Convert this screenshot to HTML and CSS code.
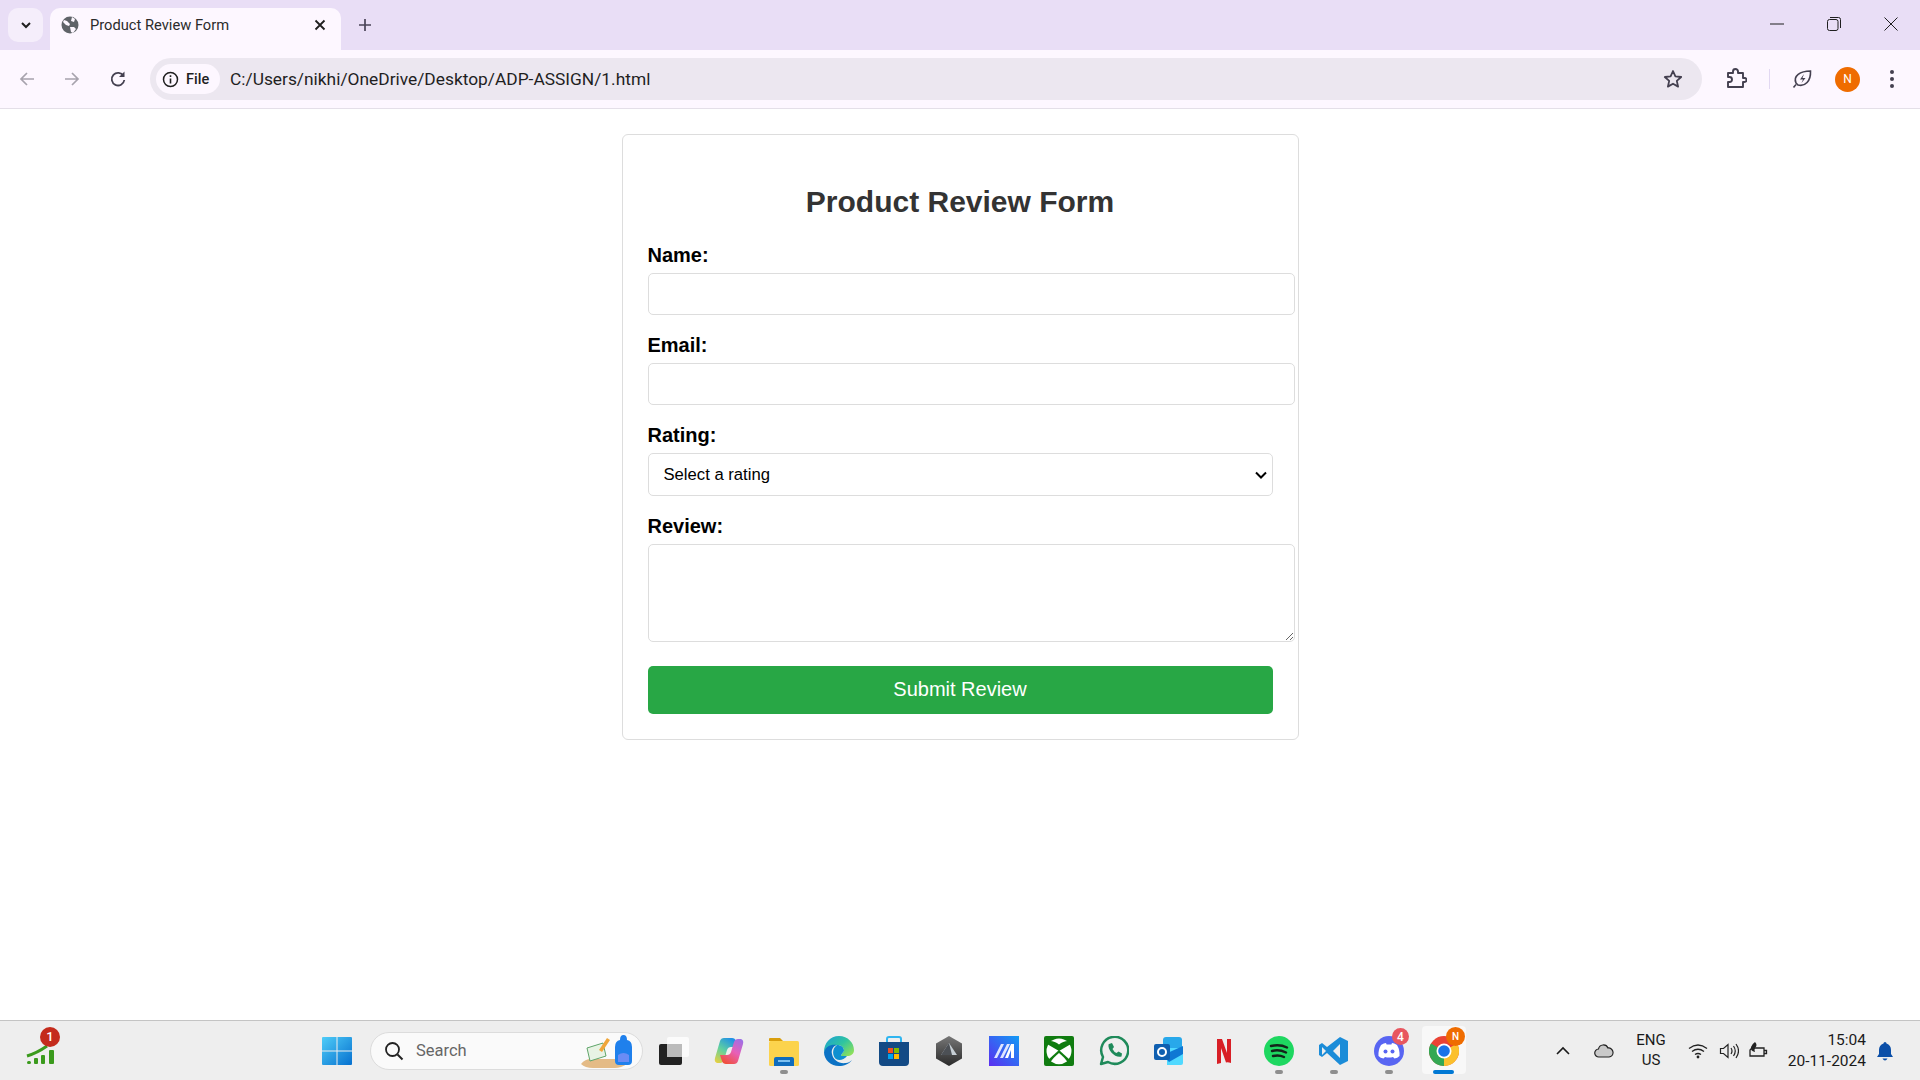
FILE: index.html
```html
<!DOCTYPE html>
<html>
<head>
    <meta charset="utf-8">
    <title>Product Review Form</title>
    <link rel="stylesheet" href="styles.css">
</head>
<body>
    <!-- browser tabs -->
    <div class="tabstrip">
        <div class="tabsearch">
            <svg width="14" height="14" viewBox="0 0 14 14"><path d="M3 5l4 4 4-4" fill="none" stroke="#1f1f1f" stroke-width="2"/></svg>
        </div>
        <div class="tab">
            <svg class="favicon" width="18" height="18" viewBox="0 0 18 18"><circle cx="9" cy="9" r="8.5" fill="#5f6368"/><path d="M3 4l3 1 3 3-1 2-3-1-3-3zM11 1l3 2-1 3-3-1zM9 11l4 0 2 2-3 4-2-1z" fill="#fdf7ff"/></svg>
            <span class="tabtitle">Product Review Form</span>
            <svg width="12" height="12" viewBox="0 0 12 12"><path d="M1.5 1.5l9 9M10.5 1.5l-9 9" stroke="#1f1f1f" stroke-width="1.8"/></svg>
        </div>
        <svg class="newtab" width="14" height="14" viewBox="0 0 14 14"><path d="M7 1v12M1 7h12" stroke="#4a4458" stroke-width="1.7"/></svg>
        <div class="winbtns">
            <svg width="14" height="14" viewBox="0 0 14 14"><path d="M0 7h14" stroke="#1f1f1f" stroke-width="1"/></svg>
            <svg width="14" height="14" viewBox="0 0 14 14"><rect x=".5" y="2.5" width="10.5" height="11" rx="2" fill="none" stroke="#1f1f1f"/><path d="M3 .5h8.500a2 2 0 0 1 2 2V11" fill="none" stroke="#1f1f1f"/></svg>
            <svg width="14" height="14" viewBox="0 0 14 14"><path d="M.5 .5l13 13M13.500 .5l-13 13" stroke="#1f1f1f" stroke-width="1"/></svg>
        </div>
    </div>

    <!-- address bar -->
    <div class="toolbar">
        <div class="navbtn">
            <svg width="18" height="18" viewBox="0 0 18 18"><path d="M16 9H3M9 3L3 9l6 6" fill="none" stroke="#a7a3ad" stroke-width="1.7"/></svg>
        </div>
        <div class="navbtn">
            <svg width="18" height="18" viewBox="0 0 18 18"><path d="M2 9h13M9 3l6 6-6 6" fill="none" stroke="#a7a3ad" stroke-width="1.7"/></svg>
        </div>
        <div class="navbtn navbtn-reload">
            <svg width="18" height="18" viewBox="0 0 18 18"><path d="M14.500 6A6.300 6.300 0 1 0 15.300 10" fill="none" stroke="#444050" stroke-width="1.800"/><path d="M15.500 1.500V7h-5.500z" fill="#444050"/></svg>
        </div>
        <div class="omnibox">
            <div class="chip">
                <svg width="17" height="17" viewBox="0 0 17 17"><circle cx="8.500" cy="8.500" r="7" fill="none" stroke="#1f1f1f" stroke-width="1.500"/><path d="M8.500 7.500v5M8.500 4.300v1.800" stroke="#1f1f1f" stroke-width="1.600"/></svg>
                <span>File</span>
            </div>
            <span class="url">C:/Users/nikhi/OneDrive/Desktop/ADP-ASSIGN/1.html</span>
            <svg class="star" width="20" height="20" viewBox="0 0 20 20"><path d="M10 2l2.400 5.400 5.800.6-4.400 3.900 1.300 5.700L10 14.700l-5.100 2.900 1.300-5.700L1.800 8l5.800-.6z" fill="none" stroke="#444050" stroke-width="1.800" stroke-linejoin="round"/></svg>
        </div>
        <div class="toolbtns">
            <svg class="btn-ext" width="22" height="22" viewBox="0 0 22 22"><path d="M3 5h5V3.500a2.500 2.500 0 0 1 5 0V5h5v5h1.500a2 2 0 0 1 0 4H18v5H3v-5h1.500a2.500 2.500 0 0 0 0-5H3z" fill="none" stroke="#444050" stroke-width="1.900" stroke-linejoin="round"/></svg>
            <span class="divider"></span>
            <svg class="btn-leaf" width="20" height="20" viewBox="0 0 20 20"><path d="M4 14C1 7 8 2 18.500 2 19 12 13 18 6 16z" fill="none" stroke="#444050" stroke-width="1.600"/><path d="M1.500 18.500L4 15.500" stroke="#444050" stroke-width="1.600"/><path d="M12 5l-4 5.500h3L9.500 14l4-5h-3z" fill="#444050"/></svg>
            <span class="avatar">N</span>
            <svg class="btn-dots" width="6" height="20" viewBox="0 0 6 20"><circle cx="3" cy="3" r="2" fill="#444050"/><circle cx="3" cy="10" r="2" fill="#444050"/><circle cx="3" cy="17" r="2" fill="#444050"/></svg>
        </div>
    </div>

    <!-- the page itself -->
    <div class="page">
        <form class="reviewcard" action="">
            <h2>Product Review Form</h2>
            <div class="group">
                <label for="name">Name:</label>
                <input type="text" id="name">
            </div>
            <div class="group">
                <label for="email">Email:</label>
                <input type="email" id="email">
            </div>
            <div class="group">
                <label for="rating">Rating:</label>
                <select id="rating">
                    <option>Select a rating</option>
                </select>
            </div>
            <div class="group group-last">
                <label for="review">Review:</label>
                <textarea id="review"></textarea>
            </div>
            <button type="button" class="submit">Submit Review</button>
        </form>
    </div>

    <!-- windows taskbar -->
    <div class="taskbar">
        <div class="widget">
            <svg width="34" height="30" viewBox="0 0 34 30"><g fill="#3a9a1c"><rect x="2" y="25" width="4" height="3" rx="1.500"/><rect x="9" y="22" width="4" height="6" rx="1"/><rect x="16" y="19" width="4" height="9" rx="1"/><rect x="24" y="14" width="5" height="14" rx="1"/></g><path d="M2 20Q12 17 22 10" fill="none" stroke="#3a9a1c" stroke-width="3"/></svg>
            <span class="badge badge-red">1</span>
        </div>
        <svg class="winlogo" width="30" height="30" viewBox="0 0 30 30">
            <defs><linearGradient id="wl" x1="0" y1="0" x2="1" y2="1"><stop offset="0" stop-color="#4fcdf8"/><stop offset="1" stop-color="#0670cf"/></linearGradient></defs>
            <path d="M1 1h13.500v13.500H0V2a1 1 0 0 1 1-1zM15.500 1H29a1 1 0 0 1 1 1v12.500H15.500zM0 15.500h14.500V29H1a1 1 0 0 1-1-1zM15.500 15.500H30V28a1 1 0 0 1-1 1H15.500z" fill="url(#wl)"/>
        </svg>
        <div class="searchbox">
            <svg width="20" height="20" viewBox="0 0 20 20"><circle cx="8.500" cy="8.500" r="6.500" fill="none" stroke="#222" stroke-width="1.800"/><path d="M13.500 13.500l5 5" stroke="#222" stroke-width="2"/></svg>
            <span class="searchtext">Search</span>
            <svg class="searchart" width="56" height="36" viewBox="0 0 56 36">
                <path d="M2 31q4-5 10-5h24q8 0 12 5-6 4-12 4H14q-8 0-12-4z" fill="#e4bb86"/>
                <path d="M8 15l16-5 3 13-16 5z" fill="#e8f3e4" stroke="#5fa56a" stroke-width="1"/>
                <path d="M20 17l8-12 3 2-8 12z" fill="#f0a63a"/>
                <path d="M36 14q0-6 5-7 0-5 3.500-5t3.500 5q5 1 5 7v14q0 4-4 4h-9q-4 0-4-4z" fill="#1f80ec"/>
                <path d="M39 22q5.500-4 11 0v7h-11z" fill="#6a8cf5"/>
            </svg>
        </div>
        <div class="applist">
            <div class="app">
                <svg width="30" height="30" viewBox="0 0 30 30"><rect x="0" y="8" width="23" height="21" rx="2" fill="#222"/><rect x="8" y="1" width="22" height="20" rx="2" fill="#fff" fill-opacity=".75"/><rect x="8" y="8" width="15" height="13" fill="#bbb"/></svg>
            </div>
            <div class="app">
                <svg width="30" height="30" viewBox="0 0 30 30">
                    <defs>
                        <linearGradient id="cp1" x1=".7" y1="0" x2=".1" y2="1"><stop offset="0" stop-color="#1f8fe8"/><stop offset=".5" stop-color="#5fd0a0"/><stop offset="1" stop-color="#e8d040"/></linearGradient>
                        <linearGradient id="cp2" x1=".7" y1="0" x2=".1" y2="1"><stop offset="0" stop-color="#f0503c"/><stop offset=".5" stop-color="#e860b8"/><stop offset="1" stop-color="#9a70e8"/></linearGradient>
                    </defs>
                    <path d="M10 2h8q3 0 4 3l2 6h-7q-3 0-4 3l-3 10q-1 3-4 3H3q-3-1-2-5L6 5q1-3 4-3z" fill="url(#cp1)"/>
                    <path d="M10 2h8q3 0 4 3l2 6h-7q-3 0-4 3l-3 10q-1 3-4 3H3q-3-1-2-5L6 5q1-3 4-3z" fill="url(#cp2)" transform="rotate(180 15 15)"/>
                </svg>
            </div>
            <div class="app">
                <svg width="30" height="30" viewBox="0 0 30 30"><path d="M0 3q0-1 1-1h10l3 3h-14z" fill="#d99e0c"/><rect x="0" y="5" width="30" height="25" rx="1.500" fill="#fcd34d"/><path d="M5 23q0-2 2-2h16q2 0 2 2v7H5z" fill="#0f6cbd"/><rect x="9" y="24" width="12" height="2" fill="#7cc0f0"/></svg>
                <span class="pill"></span>
            </div>
            <div class="app">
                <svg width="30" height="30" viewBox="0 0 30 30">
                    <defs>
                        <linearGradient id="ed" x1="0" y1="0" x2="1" y2=".8"><stop offset="0" stop-color="#1b9ed8"/><stop offset=".55" stop-color="#2fc4a0"/><stop offset="1" stop-color="#8ee05a"/></linearGradient>
                    </defs>
                    <path d="M15 0C24 0 30 7 30 14c0 4-3 6-7 6h-6c0-2 2-3 3-5 0-4-3-6-7-6C7 9 2 12 0 16 0 7 6 0 15 0z" fill="url(#ed)"/>
                    <path d="M0 16C2 10 7 8 13 9c-4 1-6 5-5 9 1 6 7 10 14 9 2 0 4-1 6-3-3 4-8 6-13 6C7 30 0 24 0 16z" fill="#0c72c4"/>
                    <path d="M13 9c4 0 7 2 7 6-1 2-3 3-3 5h6c-3 4-8 5-11 3-3-2-5-10 1-14z" fill="#0f8fd0"/>
                </svg>
            </div>
            <div class="app">
                <svg width="30" height="30" viewBox="0 0 30 30"><path d="M8 6V3q0-2 2-2h10q2 0 2 2v3" fill="none" stroke="#2fb5f0" stroke-width="2"/><path d="M0 6h30v20q0 4-4 4H4q-4 0-4-4z" fill="#134a85"/><rect x="9" y="12" width="5" height="5" fill="#f25022"/><rect x="15" y="12" width="5" height="5" fill="#7fba00"/><rect x="9" y="18" width="5" height="5" fill="#00a4ef"/><rect x="15" y="18" width="5" height="5" fill="#ffb900"/></svg>
            </div>
            <div class="app">
                <svg width="30" height="30" viewBox="0 0 30 30">
                    <defs><linearGradient id="hx" x1="0" y1="0" x2="0" y2="1"><stop offset="0" stop-color="#777"/><stop offset="1" stop-color="#2a2a2a"/></linearGradient></defs>
                    <path d="M15 0l13 7.500v15L15 30 2 22.500v-15z" fill="url(#hx)"/>
                    <path d="M15 7l8 12H7z" fill="#c6ced4"/><path d="M15 7l3 12H7z" fill="#4c5055"/>
                </svg>
            </div>
            <div class="app">
                <svg width="30" height="30" viewBox="0 0 30 30">
                    <defs><linearGradient id="ma" x1="0" y1="1" x2="1" y2="0"><stop offset="0" stop-color="#5b2df0"/><stop offset="1" stop-color="#129cf5"/></linearGradient></defs>
                    <rect width="30" height="30" fill="url(#ma)"/>
                    <path d="M5 22L12 8h3L8 22zM11 22L18 8h3l-7 14z" fill="#dfe6ff"/><path d="M16 22l6-14h3v14h-3v-8l-3 8z" fill="#fff"/>
                </svg>
            </div>
            <div class="app">
                <svg width="30" height="30" viewBox="0 0 30 30"><rect width="30" height="30" rx="2" fill="#107c10"/><circle cx="15" cy="15" r="12.500" fill="#fff"/><path d="M6 5Q11 5 15 8.500 19 5 24 5L27 8 15 15 3 8z" fill="#107c10"/><path d="M15 14L4 24 8 29H22L26 24z" fill="#107c10"/><path d="M15 17Q9 22 7 25.500 15 31 23 25.500 21 22 15 17z" fill="#fff"/></svg>
            </div>
            <div class="app">
                <svg width="30" height="30" viewBox="0 0 30 30"><path d="M2 28l2-7A13.500 13.500 0 1 1 9 26z" fill="none" stroke="#1f8a5a" stroke-width="2.500" stroke-linejoin="round"/><path d="M10 8l3-1 2 4-1.500 2q1.500 3 4 4l2-1.500 3.500 2-.5 3c-6 2-14-6-13-12z" fill="#1f8a5a"/></svg>
            </div>
            <div class="app">
                <svg width="30" height="30" viewBox="0 0 30 30"><path d="M12 1h13q3 0 3 3v12l-14 4H9V4q0-3 3-3z" fill="#28a8ea"/><path d="M13 12h16v15q0 2-2 2H13z" fill="#50d9ff"/><path d="M9 19l20-9v8l-14 8z" fill="#0f78d4"/><rect x="0" y="8" width="16" height="16" rx="2" fill="#0f5fb0"/><circle cx="8" cy="16" r="4" fill="none" stroke="#fff" stroke-width="2"/></svg>
            </div>
            <div class="app">
                <svg width="30" height="30" viewBox="0 0 30 30"><path d="M8 3h5l5 14V3h4v24q-3-1-5-.5L12 12v15l-4 1z" fill="#d81f26"/></svg>
            </div>
            <div class="app">
                <svg width="30" height="30" viewBox="0 0 30 30"><circle cx="15" cy="15" r="15" fill="#1ed760"/><path d="M7 10q9-2 16 1.500M8 15q7-2 14 1.500M9 20q6-1.500 11 1" fill="none" stroke="#14231a" stroke-width="2.400" stroke-linecap="round"/></svg>
                <span class="pill"></span>
            </div>
            <div class="app">
                <svg width="30" height="30" viewBox="0 0 30 30"><path d="M21 1l8 4v20l-8 4-13-12-5 4-3-2v-10l3-2 5 4z" fill="#1b8cd8"/><path d="M21 8l-7 7 7 7z" fill="#eee"/><path d="M3 11l4 4-4 4z" fill="#eee"/></svg>
                <span class="pill"></span>
            </div>
            <div class="app">
                <svg width="30" height="30" viewBox="0 0 30 30"><circle cx="15" cy="15" r="15" fill="#5865f2"/><path d="M7 9q3-2 5-2l.6 1.500h4.800L18 7q2 0 5 2 3 5 2.500 11-2 2-5 2.500L19 21q-4 1-8 0l-1.500 1.500q-3-.5-5-2.500Q4 14 7 9z" fill="#fff"/><circle cx="11.500" cy="15.500" r="2" fill="#5865f2"/><circle cx="18.500" cy="15.500" r="2" fill="#5865f2"/></svg>
                <span class="badge badge-count">4</span>
                <span class="pill"></span>
            </div>
            <div class="app app-active">
                <svg width="30" height="30" viewBox="0 0 30 30"><circle cx="15" cy="15" r="15" fill="#ea4335"/><path d="M15 15L28 7.500A15 15 0 0 1 15 30z" fill="#fbc02d"/><path d="M15 15L15 30A15 15 0 0 1 2 7.500z" fill="#34a853"/><circle cx="15" cy="15" r="7.500" fill="#fff"/><circle cx="15" cy="15" r="5.800" fill="#1a73e8"/></svg>
                <span class="badge badge-profile">N</span>
                <span class="pill pill-active"></span>
            </div>
        </div>
        <div class="tray">
            <svg class="tray-caret" width="14" height="10" viewBox="0 0 14 10"><path d="M1 8l6-6 6 6" fill="none" stroke="#1a1a1a" stroke-width="1.600"/></svg>
            <svg class="tray-cloud" width="20" height="14" viewBox="0 0 20 14"><path d="M5 13a4 4 0 0 1-.500-8A5 5 0 0 1 14 4a4.500 4.500 0 0 1 1 9z" fill="#c9c9c9" stroke="#222" stroke-width="1.200"/></svg>
            <div class="tray-lang"><span>ENG</span><span>US</span></div>
            <svg class="tray-wifi" width="20" height="16" viewBox="0 0 20 16"><path d="M1 5.500q9-7 18 0M4 8.500q6-4.500 12 0M7 11.500q3-2 6 0" fill="none" stroke="#222" stroke-width="1.300"/><circle cx="10" cy="14" r="1.400" fill="#222"/></svg>
            <svg class="tray-vol" width="20" height="18" viewBox="0 0 20 18"><path d="M1.500 6.500h3L9 2.500v13L4.500 11.500h-3z" fill="none" stroke="#222" stroke-width="1.200"/><path d="M12 6q2 3 0 6M14.500 4q3.500 5 0 10M17 2q5 7 0 14" fill="none" stroke="#222" stroke-width="1.200"/></svg>
            <svg class="tray-batt" width="20" height="18" viewBox="0 0 20 18"><path d="M4 6h12v8H2V8z" fill="none" stroke="#222" stroke-width="1.300"/><path d="M16 8.500h2.500v3H16" fill="none" stroke="#222" stroke-width="1.300"/><path d="M7 0q3 3 0 6-1 2 0 4-5-1-4-5 1-3 4-5z" fill="#222"/></svg>
            <div class="tray-clock"><span>15:04</span><span>20-11-2024</span></div>
            <svg class="tray-bell" width="16" height="20" viewBox="0 0 16 20"><path d="M8 1q1.500 0 1.500 1.500Q14 4 14 9v4l2 3H0l2-3V9q0-5 4.500-6.500Q6.500 1 8 1z" fill="#0b4fa8"/><path d="M5.500 17.500h5q-1 2-2.500 2t-2.500-2z" fill="#0b4fa8"/></svg>
        </div>
    </div>
</body>
</html>
```
FILE: styles.css
```css
*
{
    box-sizing: border-box;
}
body
{
    margin: 0;
    height: 1080px;
    display: flex;
    flex-direction: column;
    overflow: hidden;
    background: #FFFFFF;
    font-family: "Liberation Sans", Arial, sans-serif;
}

/* browser tabs */
.tabstrip
{
    height: 50px;
    display: flex;
    align-items: flex-start;
    background: #E9DEF6;
    font-family: Roboto, sans-serif;
}
.tabsearch
{
    width: 35px;
    height: 34px;
    margin: 8px 0 0 8px;
    display: flex;
    align-items: center;
    justify-content: center;
    background: #F5EEFB;
    border-radius: 10px;
}
.tab
{
    width: 291px;
    height: 42px;
    margin: 8px 0 0 7px;
    padding: 0 15px 8px 11px;
    display: flex;
    align-items: center;
    background: #FDF7FF;
    border-radius: 10px 10px 0 0;
}
.tabtitle
{
    flex: 1;
    margin-left: 11px;
    font-size: 14.7px;
    color: #2b2b2b;
}
.newtab
{
    margin: 18px 0 0 17px;
}
.winbtns
{
    margin: 17px 22px 0 auto;
    display: flex;
    gap: 43px;
}

/* address bar */
.toolbar
{
    height: 59px;
    display: flex;
    align-items: center;
    padding-left: 4px;
    background: #FDF7FF;
    border-bottom: 1px solid #E4DFE8;
}
.navbtn
{
    width: 45px;
    display: flex;
    justify-content: center;
}
.navbtn-reload
{
    margin-left: 1px;
}
.omnibox
{
    width: 1552px;
    height: 42px;
    margin-left: 10px;
    padding: 0 19px 0 6px;
    display: flex;
    align-items: center;
    background: #ECE7F0;
    border-radius: 21px;
    font-family: Roboto, sans-serif;
}
.chip
{
    width: 64px;
    height: 30px;
    display: flex;
    align-items: center;
    gap: 7px;
    padding-left: 6px;
    background: #FDF7FF;
    border-radius: 15px;
    font-size: 14.5px;
    font-weight: 500;
    color: #1f1f1f;
}
.url
{
    flex: 1;
    margin-left: 10px;
    font-size: 17.35px;
    color: #1f1f1f;
}
.toolbtns
{
    flex: 1;
    display: flex;
    align-items: center;
}
.btn-ext
{
    margin-left: 23px;
}
.divider
{
    width: 1px;
    height: 20px;
    margin-left: 22px;
    background: #E2D8F2;
}
.btn-leaf
{
    margin-left: 22px;
}
.avatar
{
    width: 25px;
    height: 25px;
    margin-left: 23px;
    display: flex;
    align-items: center;
    justify-content: center;
    border-radius: 50%;
    background: #EF6C00;
    color: #FFFFFF;
    font: 12px Roboto, sans-serif;
}
.btn-dots
{
    margin-left: 29px;
}

/* the form */
.page
{
    flex: 1;
}
.reviewcard
{
    width: 677px;
    margin: 25px auto 0;
    padding: 25px;
    background: #FFFFFF;
    border: 1px solid #DDDDDD;
    border-radius: 6px;
}
.reviewcard h2
{
    margin: 23px 0 24px;
    font-size: 30px;
    line-height: 37px;
    text-align: center;
    color: #333333;
}
.group
{
    margin-bottom: 18.75px;
}
.group-last
{
    margin-bottom: 24px;
}
.group label
{
    display: block;
    height: 23px;
    margin-bottom: 6.25px;
    font-size: 20px;
    line-height: 23px;
    font-weight: bold;
    color: #000000;
}
.group input
{
    display: block;
    box-sizing: content-box;
    width: 100%;
    height: 20px;
    padding: 10px;
    border: 1px solid #DDDDDD;
    border-radius: 5px;
}
.group select
{
    display: block;
    width: 100%;
    height: 43px;
    padding: 10px 10px 10px 15px;
    border: 1px solid #DDDDDD;
    border-radius: 5px;
    appearance: none;
    background: #FFFFFF url("data:image/svg+xml,%3Csvg xmlns='http://www.w3.org/2000/svg' width='12' height='8'%3E%3Cpath d='M1 1.500l5 5 5-5' fill='none' stroke='%23000' stroke-width='2'/%3E%3C/svg%3E") no-repeat right 5px center;
    font: 16.67px "Liberation Sans", Arial, sans-serif;
    color: #000000;
}
.group textarea
{
    display: block;
    box-sizing: content-box;
    width: 100%;
    height: 76px;
    padding: 10px;
    border: 1px solid #DDDDDD;
    border-radius: 5px;
}
.submit
{
    display: block;
    width: 100%;
    height: 48px;
    padding-bottom: 3px;
    border: none;
    border-radius: 5px;
    background: #28A745;
    color: #FFFFFF;
    font: 20px "Liberation Sans", Arial, sans-serif;
}

/* windows taskbar */
.taskbar
{
    height: 60px;
    display: flex;
    align-items: center;
    background: #EEEEEE;
    border-top: 1px solid #C4C4C4;
    font-family: Roboto, sans-serif;
}
.widget
{
    position: relative;
    width: 34px;
    height: 30px;
    margin-left: 25px;
}
.badge
{
    position: absolute;
    display: flex;
    align-items: center;
    justify-content: center;
    border-radius: 50%;
    color: #FFFFFF;
}
.badge-red
{
    top: -9px;
    right: -1px;
    width: 20px;
    height: 20px;
    background: #C42B1C;
    font-size: 13px;
    font-weight: 500;
}
.winlogo
{
    margin-left: 263px;
}
.searchbox
{
    width: 273px;
    height: 38px;
    margin-left: 18px;
    padding: 0 7px 0 13px;
    display: flex;
    align-items: center;
    background: #FAFAFA;
    border: 1px solid #DCDCDC;
    border-radius: 19px;
}
.searchtext
{
    flex: 1;
    margin-left: 12px;
    font-size: 16.500px;
    color: #666666;
}
.applist
{
    margin-left: 3px;
    display: flex;
}
.app
{
    position: relative;
    width: 55px;
    height: 59px;
    display: flex;
    align-items: center;
    justify-content: center;
}
.app-active::before
{
    content: "";
    position: absolute;
    top: 5px;
    left: 6px;
    width: 44px;
    height: 48px;
    background: #F8F8F8;
    border-radius: 4px;
}
.app-active svg
{
    position: relative;
}
.pill
{
    position: absolute;
    left: 24px;
    bottom: 6px;
    width: 8px;
    height: 4px;
    border-radius: 2px;
    background: #8E8E8E;
}
.pill-active
{
    left: 17px;
    width: 21px;
    background: #0078D4;
}
.badge-count
{
    top: 7px;
    right: 7px;
    width: 17px;
    height: 17px;
    background: #E8565F;
    font-size: 12px;
    font-weight: 500;
}
.badge-profile
{
    top: 6px;
    right: 6px;
    width: 19px;
    height: 19px;
    background: #EF6C00;
    font-size: 10px;
    font-weight: 500;
}
.tray
{
    flex: 1;
    display: flex;
    align-items: center;
    color: #1A1A1A;
}
.tray-caret
{
    margin-left: 85px;
}
.tray-cloud
{
    margin-left: 24px;
}
.tray-lang
{
    width: 40px;
    margin-left: 17px;
    display: flex;
    flex-direction: column;
    align-items: center;
    gap: 1px;
    font-size: 15px;
    line-height: 19px;
}
.tray-wifi
{
    margin-left: 17px;
}
.tray-vol
{
    margin-left: 11px;
}
.tray-batt
{
    margin-left: 9px;
}
.tray-clock
{
    width: 88px;
    margin-left: 10px;
    display: flex;
    flex-direction: column;
    align-items: flex-end;
    gap: 2px;
    font-size: 15.5px;
    line-height: 19px;
}
.tray-bell
{
    margin-left: 11px;
}
```
